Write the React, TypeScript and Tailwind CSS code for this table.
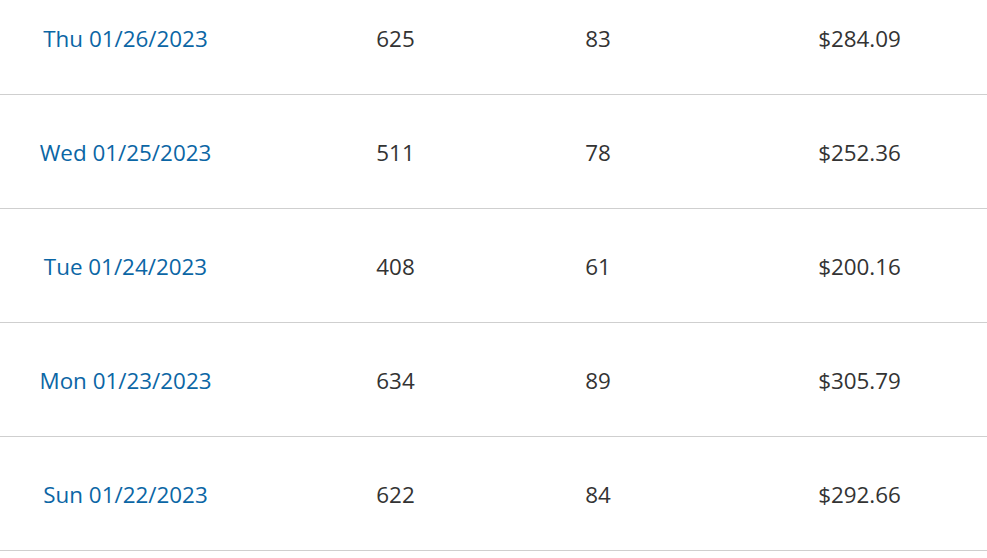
const rows = [
  { date: "Thu 01/26/2023", visits: "625", orders: "83", total: "$284.09" },
  { date: "Wed 01/25/2023", visits: "511", orders: "78", total: "$252.36" },
  { date: "Tue 01/24/2023", visits: "408", orders: "61", total: "$200.16" },
  { date: "Mon 01/23/2023", visits: "634", orders: "89", total: "$305.79" },
  { date: "Sun 01/22/2023", visits: "622", orders: "84", total: "$292.66" },
];

export default function App() {
  return (
    <div
      className="w-[987px] h-[558px] overflow-hidden bg-white text-[22.4px] text-[#333]"
      style={{ fontFamily: '"Open Sans", "Liberation Sans", sans-serif' }}
    >
      <div className="-mt-[19px]">
        {rows.map((r) => (
          <div
            key={r.date}
            className="grid grid-cols-[251px_289px_116px_1fr] h-[114px] pt-[2px] items-center border-b border-[#cfcfcf] text-center"
          >
            <a className="text-[#0b66a5] cursor-pointer">{r.date}</a>
            <div>{r.visits}</div>
            <div>{r.orders}</div>
            <div className="pl-[76px]">{r.total}</div>
          </div>
        ))}
      </div>
    </div>
  );
}
